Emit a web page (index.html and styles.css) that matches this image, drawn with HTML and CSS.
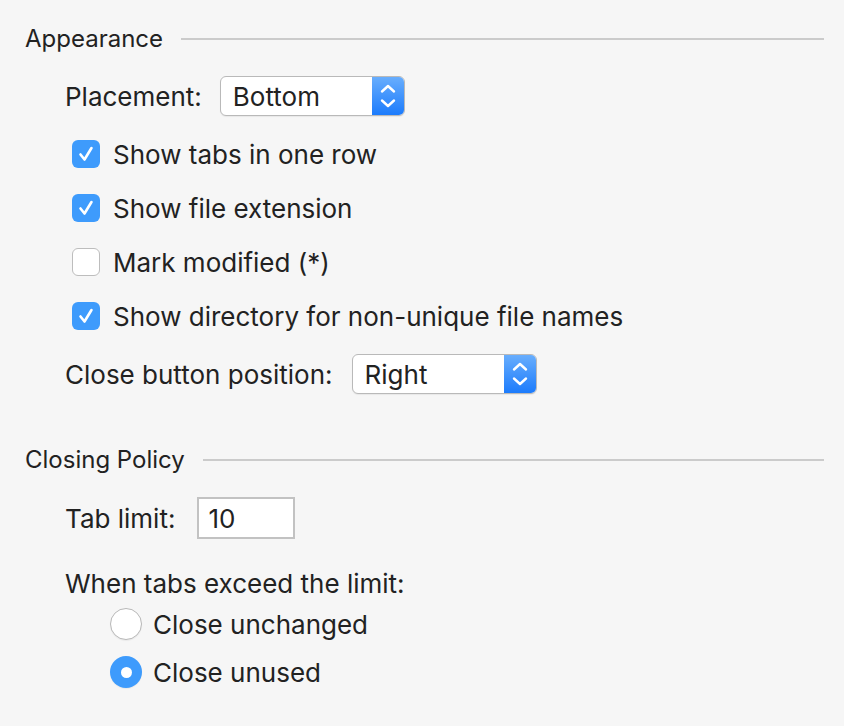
FILE: index.html
```html
<!DOCTYPE html>
<html lang="en">
<head>
<meta charset="utf-8">
<title>Editor Tabs</title>
<link rel="stylesheet" href="styles.css">
</head>
<body>
<div class="panel">
  <div class="section-head first">
    <span class="section-title">Appearance</span>
    <span class="rule"></span>
  </div>

  <div class="row select-row placement">
    <span class="label">Placement:</span>
    <div class="select w-bottom">
      <span class="select-value">Bottom</span>
      <span class="select-arrows">
        <svg width="16" height="26" viewBox="0 0 16 26"><path d="M2 8.5 L8 3 L14 8.5" fill="none" stroke="#fff" stroke-width="2.4" stroke-linecap="round" stroke-linejoin="round"/><path d="M2 17.5 L8 23 L14 17.5" fill="none" stroke="#fff" stroke-width="2.4" stroke-linecap="round" stroke-linejoin="round"/></svg>
      </span>
    </div>
  </div>

  <div class="check-list">
    <label class="check-row">
      <span class="checkbox checked"><svg width="28" height="28" viewBox="0 0 28 28"><path d="M8.5 14.5 L12.5 19.5 L19.5 8" fill="none" stroke="#fff" stroke-width="2.6" stroke-linecap="round" stroke-linejoin="round"/></svg></span>
      <span class="text">Show tabs in one row</span>
    </label>
    <label class="check-row">
      <span class="checkbox checked"><svg width="28" height="28" viewBox="0 0 28 28"><path d="M8.5 14.5 L12.5 19.5 L19.5 8" fill="none" stroke="#fff" stroke-width="2.6" stroke-linecap="round" stroke-linejoin="round"/></svg></span>
      <span class="text">Show file extension</span>
    </label>
    <label class="check-row">
      <span class="checkbox"></span>
      <span class="text">Mark modified (*)</span>
    </label>
    <label class="check-row">
      <span class="checkbox checked"><svg width="28" height="28" viewBox="0 0 28 28"><path d="M8.5 14.5 L12.5 19.5 L19.5 8" fill="none" stroke="#fff" stroke-width="2.6" stroke-linecap="round" stroke-linejoin="round"/></svg></span>
      <span class="text">Show directory for non-unique file names</span>
    </label>
  </div>

  <div class="row select-row close-pos">
    <span class="label">Close button position:</span>
    <div class="select w-right">
      <span class="select-value">Right</span>
      <span class="select-arrows">
        <svg width="16" height="26" viewBox="0 0 16 26"><path d="M2 8.5 L8 3 L14 8.5" fill="none" stroke="#fff" stroke-width="2.4" stroke-linecap="round" stroke-linejoin="round"/><path d="M2 17.5 L8 23 L14 17.5" fill="none" stroke="#fff" stroke-width="2.4" stroke-linecap="round" stroke-linejoin="round"/></svg>
      </span>
    </div>
  </div>

  <div class="section-head second">
    <span class="section-title">Closing Policy</span>
    <span class="rule"></span>
  </div>

  <div class="row limit-row">
    <span class="label">Tab limit:</span>
    <div class="textfield">10</div>
  </div>

  <div class="row when-row">
    <span class="label">When tabs exceed the limit:</span>
  </div>

  <div class="radio-list">
    <label class="radio-row">
      <span class="radio"></span>
      <span class="text">Close unchanged</span>
    </label>
    <label class="radio-row">
      <span class="radio selected"><span class="dot"></span></span>
      <span class="text">Close unused</span>
    </label>
  </div>
</div>
</body>
</html>
```

FILE: styles.css
```css
html, body {
  margin: 0;
  padding: 0;
  background: #f6f6f6;
}

body {
  font-family: Inter, "Noto Sans", "Liberation Sans", sans-serif;
  color: #222;
  width: 844px;
  height: 726px;
  overflow: hidden;
}

.panel {
  display: flex;
  flex-direction: column;
  padding: 19px 20px 0 25px;
}

.section-head {
  display: flex;
  align-items: center;
  height: 40px;
  gap: 18px;
}

.section-head.second {
  margin-top: 46px;
}

.section-title {
  font-size: 24px;
  line-height: 40px;
  white-space: nowrap;
}

.rule {
  flex: 1;
  height: 2px;
  background: #cbcbcb;
}

.row {
  display: flex;
  align-items: center;
  padding-left: 40px;
}

.label {
  font-size: 26px;
  white-space: nowrap;
}

.select-row {
  height: 40px;
  gap: 18px;
}

.placement {
  margin-top: 17px;
}

.close-pos {
  margin-top: 24px;
  gap: 19px;
}

.select {
  display: flex;
  height: 38px;
  border: 1px solid #b9b9b9;
  border-radius: 6px;
  background: #fff;
  box-shadow: 0 1px 1px rgba(0,0,0,0.06);
  overflow: hidden;
}

.w-bottom { width: 183px; }
.w-right { width: 183px; }

.select-value {
  flex: 1;
  display: flex;
  align-items: center;
  padding-left: 12px;
  font-size: 26px;
}

.select-arrows {
  width: 33px;
  display: flex;
  align-items: center;
  justify-content: center;
  background: linear-gradient(#6aaffd, #1a7afc);
  margin: -1px -1px -1px 0;
  border-radius: 0 6px 6px 0;
}

.check-list {
  display: flex;
  flex-direction: column;
  gap: 26px;
  margin-top: 24px;
  padding-left: 47px;
}

.check-row {
  display: flex;
  align-items: center;
  height: 28px;
  gap: 13px;
}

.checkbox {
  width: 28px;
  height: 28px;
  box-sizing: border-box;
  border-radius: 6px;
  background: #fff;
  border: 1px solid #bdbdbd;
  flex: none;
  display: block;
}

.checkbox.checked {
  background: #3e9bfc;
  border: none;
}

.checkbox svg {
  display: block;
}

.text {
  font-size: 26px;
  white-space: nowrap;
}

.limit-row {
  margin-top: 17px;
  height: 42px;
  gap: 22px;
}

.textfield {
  width: 98px;
  height: 42px;
  box-sizing: border-box;
  border: 2px solid #c2c2c2;
  background: #fff;
  font-size: 26px;
  padding-left: 9px;
  display: flex;
  align-items: center;
}

.when-row {
  margin-top: 30px;
  height: 28px;
}

.radio-list {
  display: flex;
  flex-direction: column;
  gap: 16px;
  margin-top: 11px;
  padding-left: 85px;
}

.radio-row {
  display: flex;
  align-items: center;
  height: 32px;
  gap: 11px;
}

.radio {
  width: 32px;
  height: 32px;
  box-sizing: border-box;
  border-radius: 50%;
  background: #fff;
  border: 1px solid #b8b8b8;
  box-shadow: 0 1px 1px rgba(0,0,0,0.05);
  flex: none;
  display: flex;
  align-items: center;
  justify-content: center;
}

.radio.selected {
  background: #3e9bfc;
  border: none;
}

.dot {
  width: 11px;
  height: 11px;
  border-radius: 50%;
  background: #fff;
}
```
